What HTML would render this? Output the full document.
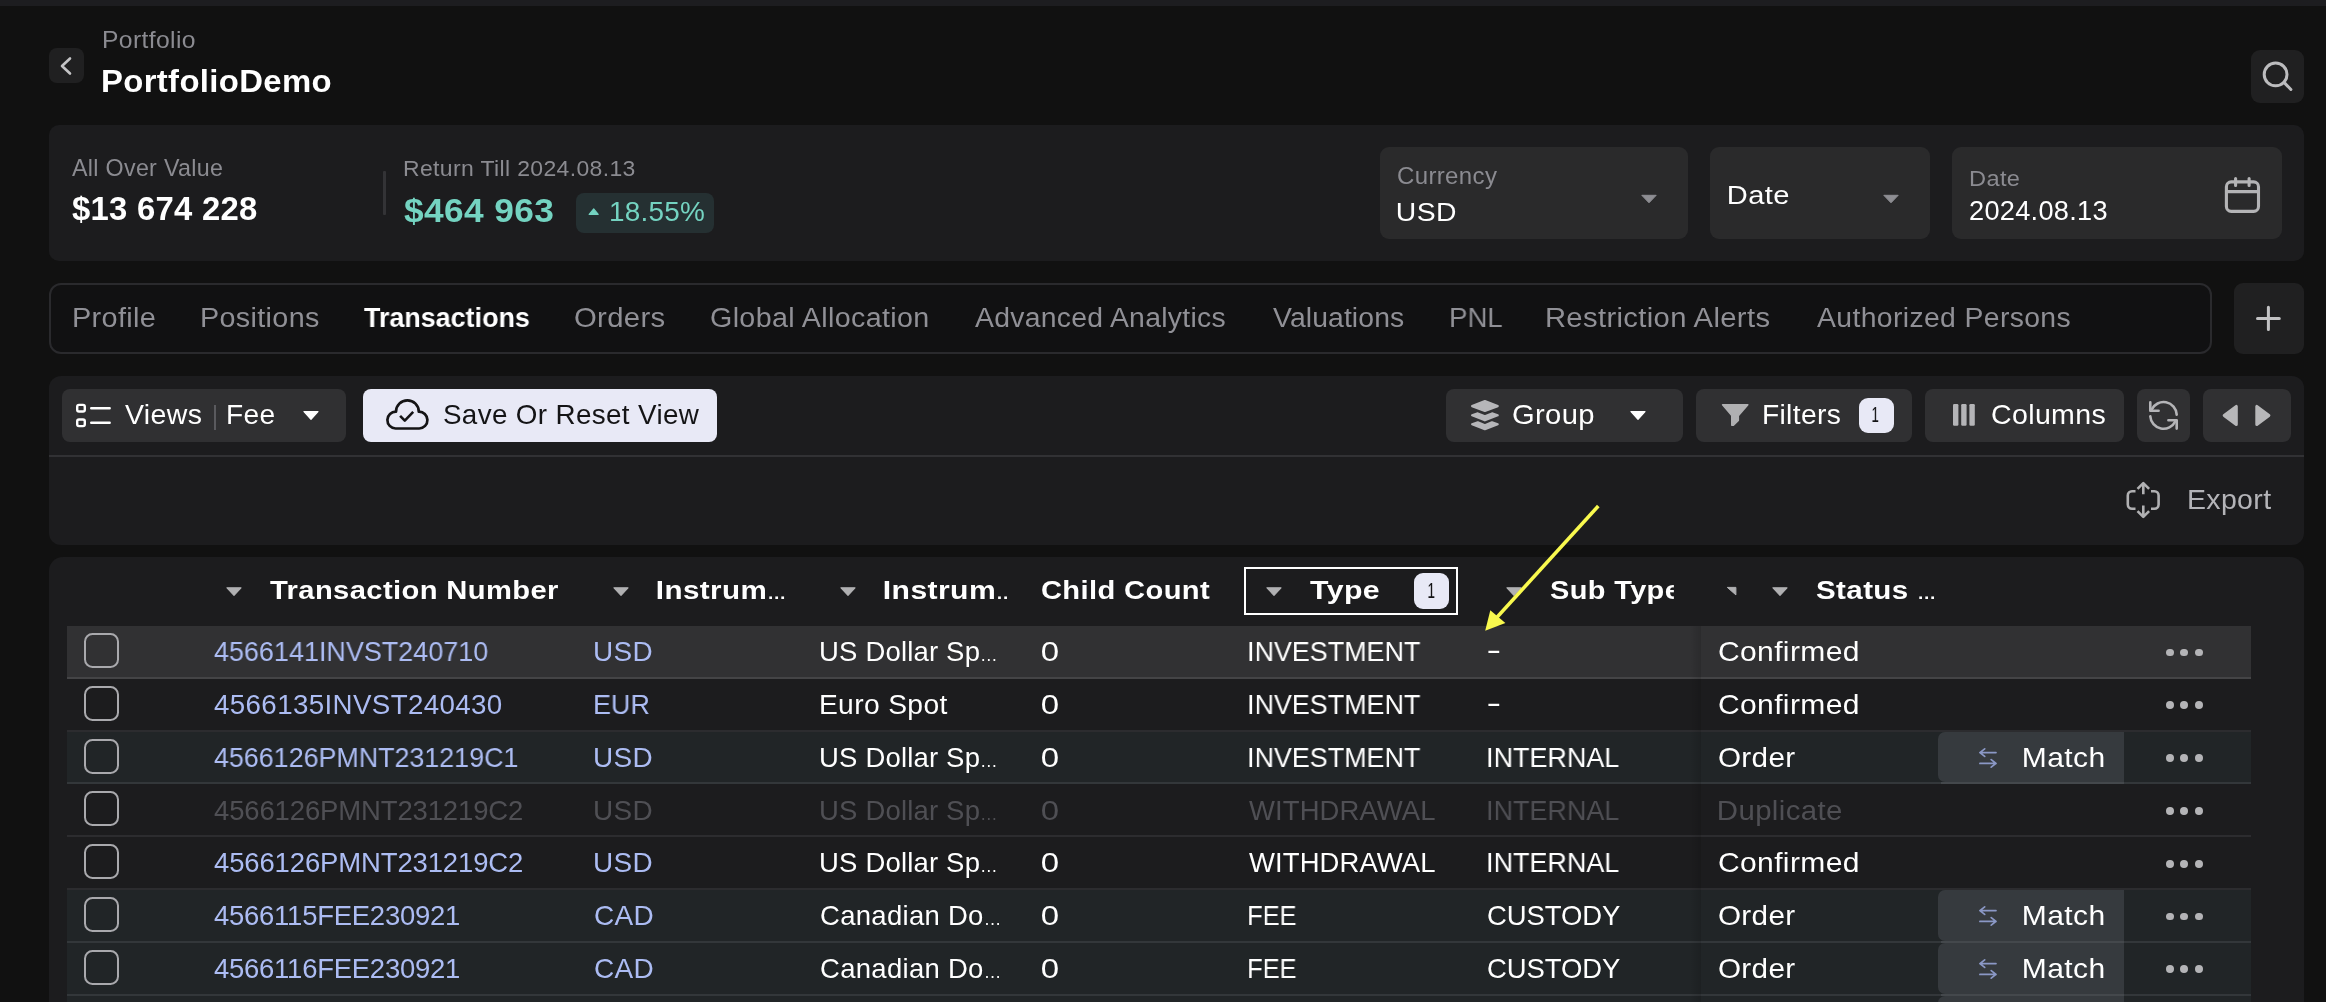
<!DOCTYPE html>
<html lang="en">
<head>
<meta charset="utf-8">
<title>PortfolioDemo – Transactions</title>
<style>
*{box-sizing:border-box;margin:0;padding:0}
html,body{width:2326px;height:1002px;overflow:hidden;background:#111111}
body{position:relative;font-family:"Liberation Sans",sans-serif;color:#fff}
.ab,.t,.box,.row,.cb,.dot,.match{position:absolute}
.t{white-space:nowrap;display:block;will-change:transform}
.box{border-radius:8px}
.row{left:67px;width:2184px}
.cb{left:84px;width:35px;height:35px;border:2px solid #a9a9ad;border-radius:8.5px}
.dot{width:7.8px;height:7.8px;border-radius:50%;background:#b4b4b7}
.match{left:1938px;width:186px;background:#363a3e;border-radius:7px 0 0 7px}
.btn{background:#303032}
.tri{position:absolute;width:0;height:0}
</style>
</head>
<body>
<!-- top strip -->
<div class="ab" style="left:0;top:0;width:2326px;height:6px;background:#1d1d20"></div>

<!-- back button -->
<div class="box" style="left:49px;top:48px;width:35px;height:35px;background:#202021;border-radius:8px"></div>
<svg class="ab" style="left:49px;top:48px" width="35" height="35" viewBox="0 0 35 35" fill="none" stroke="#c4c4c6" stroke-width="2.6" stroke-linecap="round" stroke-linejoin="round"><path d="M21 10.5L13 18l8 7.5"/></svg>

<!-- search button -->
<div class="box" style="left:2251px;top:50px;width:53px;height:53px;background:#202021;border-radius:9px"></div>
<svg class="ab" style="left:2251px;top:50px" width="53" height="53" viewBox="0 0 53 53" fill="none" stroke="#bcbcbe" stroke-width="3" stroke-linecap="round"><circle cx="24.600" cy="24.400" r="11.400"/><path d="M33 32.400L39.900 39.500"/></svg>

<!-- summary card -->
<div class="box" style="left:49px;top:125px;width:2255px;height:136px;background:#1c1c1e;border-radius:10px"></div>
<div class="ab" style="left:383px;top:171px;width:2.5px;height:44px;background:#333336;border-radius:1px"></div>
<!-- pct badge -->
<div class="box" style="left:576px;top:192.7px;width:138.2px;height:40.4px;background:#253032;border-radius:8px"></div>
<svg class="ab" style="left:587px;top:207px" width="14" height="10" viewBox="0 0 14 10"><path d="M6.700 1.900L11.200 7.400H2.200z" fill="#74d3c1" stroke="#74d3c1" stroke-width="1.200" stroke-linejoin="round"/></svg>

<!-- select boxes -->
<div class="box" style="left:1380px;top:147px;width:308px;height:92px;background:#2a2a2b;border-radius:9px"></div>
<svg class="ab" style="left:1640px;top:194px" width="18" height="10" viewBox="0 0 18 10"><path d="M1.8 1.3h14.4L9 8.8z" fill="#8e8e93" stroke="#8e8e93" stroke-width="1" stroke-linejoin="round"/></svg>
<div class="box" style="left:1710px;top:147px;width:220px;height:92px;background:#2a2a2b;border-radius:9px"></div>
<svg class="ab" style="left:1882px;top:194px" width="18" height="10" viewBox="0 0 18 10"><path d="M1.8 1.3h14.4L9 8.8z" fill="#8e8e93" stroke="#8e8e93" stroke-width="1" stroke-linejoin="round"/></svg>
<div class="box" style="left:1952px;top:147px;width:330px;height:92px;background:#2a2a2b;border-radius:9px"></div>
<!-- calendar -->
<svg class="ab" style="left:2223px;top:175px" width="40" height="40" viewBox="0 0 40 40" fill="none" stroke="#b4b4b6" stroke-width="3.100" stroke-linecap="round" stroke-linejoin="round"><rect x="3.400" y="6.900" width="32.100" height="29.500" rx="4.800"/><path d="M3.600 16.600h31.700"/><path d="M12.600 3.600v6.800M26.100 3.600v6.800"/></svg>

<!-- tabs container -->
<div class="box" style="left:49px;top:283px;width:2163px;height:71px;border:2px solid #2a2a2d;border-radius:12px;background:#111112"></div>
<!-- plus -->
<div class="box" style="left:2234px;top:283px;width:70px;height:71px;background:#202021;border-radius:9px"></div>
<svg class="ab" style="left:2254px;top:304px" width="30" height="30" viewBox="0 0 30 30" fill="none" stroke="#c2c2c4" stroke-width="3" stroke-linecap="round"><path d="M3.500 14.400h21.800M14.400 3.300v22.200"/></svg>

<!-- toolbar panel -->
<div class="box" style="left:49px;top:376px;width:2255px;height:169px;background:#1c1c1e;border-radius:12px"></div>
<div class="ab" style="left:49px;top:455px;width:2255px;height:2px;background:#313134"></div>

<!-- views button -->
<div class="box btn" style="left:62px;top:389px;width:284px;height:53px"></div>
<svg class="ab" style="left:75px;top:403px" width="38" height="26" viewBox="0 0 38 26" fill="none" stroke="#ffffff" stroke-width="2.4" stroke-linecap="round"><rect x="2.2" y="1.9" width="7.6" height="6.6" rx="1.8"/><rect x="2.2" y="16.5" width="7.6" height="6.6" rx="1.8"/><path d="M16.2 5.2h18.5M16.2 19.8h18.5"/></svg>
<div class="ab" style="left:214.2px;top:404.5px;width:1.7px;height:25px;background:#5a5a5e"></div>
<svg class="ab" style="left:302px;top:410px" width="18" height="11" viewBox="0 0 18 11"><path d="M2 1.5h14L9 9.3z" fill="#fff" stroke="#fff" stroke-width="1.2" stroke-linejoin="round"/></svg>

<!-- save button -->
<div class="box" style="left:363px;top:389px;width:354px;height:53px;background:#e8e9f6"></div>
<svg class="ab" style="left:380px;top:394px" width="56" height="42" viewBox="380 394 56 42" fill="none" stroke="#141416" stroke-width="2.7" stroke-linejoin="round"><path d="M395.6 428.5A8.4 8.4 0 1 1 396 411.7A11.4 11.4 0 0 1 418.8 411.7A8.4 8.4 0 1 1 419.2 428.5Z"/><path d="M400.1 415.8L404.8 420.6 413.2 411.9" stroke-width="2.6"/></svg>

<!-- group button -->
<div class="box btn" style="left:1446px;top:389px;width:237px;height:53px"></div>
<svg class="ab" style="left:1466px;top:396px" width="38" height="38" viewBox="1466 396 38 38" fill="#b6b6b9" stroke="#b6b6b9" stroke-width="2.200" stroke-linejoin="round"><path d="M1484.900 401.100L1497.700 406.100 1484.900 411L1472.100 406.100Z"/><path d="M1472.100 415.3L1477.800 413.4 1484.900 416.3 1492 413.4 1497.700 415.3 1484.900 420.3Z"/><path d="M1472.100 424.2L1477.800 422.3 1484.900 425.2 1492 422.3 1497.700 424.2 1484.900 429.2Z"/></svg>
<svg class="ab" style="left:1629px;top:410px" width="18" height="11" viewBox="0 0 18 11"><path d="M2 1.500h14L9 9.300z" fill="#fff" stroke="#fff" stroke-width="1.200" stroke-linejoin="round"/></svg>

<!-- filters button -->
<div class="box btn" style="left:1696px;top:389px;width:216px;height:53px"></div>
<svg class="ab" style="left:1716px;top:400px" width="38" height="30" viewBox="1716 400 38 30" fill="#b0b0b2" stroke="#b0b0b2" stroke-width="1.6" stroke-linejoin="round"><path d="M1722.6 404.8H1747.8L1738.3 415.6V420.4L1733.4 425.2H1731.8V415.6Z"/></svg>
<div class="box" style="left:1859px;top:398px;width:35px;height:35px;background:#e8e9f6;border-radius:9px"></div>

<!-- columns button -->
<div class="box btn" style="left:1925px;top:389px;width:199px;height:53px"></div>
<svg class="ab" style="left:1952px;top:403px" width="24" height="24" viewBox="0 0 24 24" fill="#b4b4b7"><rect x="1" y="1" width="5.400" height="21.800" rx="1.200"/><rect x="9.200" y="1" width="5.400" height="21.800" rx="1.200"/><rect x="17.400" y="1" width="5.400" height="21.800" rx="1.200"/></svg>

<!-- refresh button -->
<div class="box btn" style="left:2137px;top:389px;width:53px;height:53px"></div>
<svg class="ab" style="left:2145px;top:397px" width="38" height="38" viewBox="2145 397 38 38" fill="none" stroke="#b4b4b7" stroke-width="2.6" stroke-linecap="round" stroke-linejoin="round"><path d="M2176.7 414.6A13.2 13.2 0 0 0 2151.6 409.6"/><path d="M2150.3 402.4V410.7H2158.6"/><path d="M2150.3 416.2A13.2 13.2 0 0 0 2175.4 421.2"/><path d="M2168.4 420.3H2176.7V428.6"/></svg>

<!-- arrows button -->
<div class="box btn" style="left:2203px;top:389px;width:88px;height:53px"></div>
<svg class="ab" style="left:2221px;top:403px" width="52" height="25" viewBox="0 0 52 25" fill="#b7b7b9" stroke="#b7b7b9" stroke-width="3" stroke-linejoin="round"><path d="M15.300 3.400v18.100L3.200 12.450z"/><path d="M35.800 3.400v18.100l12.100-9.050z"/></svg>

<!-- export -->
<svg class="ab" style="left:2122px;top:478px" width="44" height="44" viewBox="2122 478 44 44" fill="none" stroke="#b0b0b2" stroke-width="2.6" stroke-linejoin="round"><path d="M2135.5 491.3H2132A4.2 4.2 0 0 0 2127.8 495.5V504.5A4.2 4.2 0 0 0 2132 508.7H2135.5"/><path d="M2151 491.3H2154.4A4.2 4.2 0 0 1 2158.6 495.5V504.5A4.2 4.2 0 0 1 2154.400 508.7H2151"/><path d="M2143.3 494.200V483.600M2137.500 488.900L2143.300 483.100 2149.100 488.900"/><path d="M2143.300 505.600V516.400M2137.500 511.100L2143.300 516.900 2149.100 511.100"/></svg>

<!-- table panel -->
<div class="box" style="left:49px;top:557px;width:2255px;height:470px;background:#1c1c1e;border-radius:14px"></div>
<div class="row" style="top:626.00px;height:52.80px;background:#313133;border-bottom:2px solid #444446"></div>
<div class="cb" style="top:633.00px"></div>
<div class="dot" style="left:2165.90px;top:648.60px"></div>
<div class="dot" style="left:2180.40px;top:648.60px"></div>
<div class="dot" style="left:2194.90px;top:648.60px"></div>
<div class="row" style="top:678.80px;height:52.80px;background:#1c1c1e;border-bottom:2px solid #2c2c2f"></div>
<div class="cb" style="top:685.80px"></div>
<div class="dot" style="left:2165.90px;top:701.40px"></div>
<div class="dot" style="left:2180.40px;top:701.40px"></div>
<div class="dot" style="left:2194.90px;top:701.40px"></div>
<div class="row" style="top:731.60px;height:52.80px;background:#212527;border-bottom:2px solid #33373a"></div>
<div class="cb" style="top:738.60px"></div>
<div class="dot" style="left:2165.90px;top:754.20px"></div>
<div class="dot" style="left:2180.40px;top:754.20px"></div>
<div class="dot" style="left:2194.90px;top:754.20px"></div>
<div class="match" style="top:731.60px;height:50.80px"></div>
<div class="ab" style="left:1941px;top:782.40px;width:183px;height:2px;background:#44484c"></div>
<svg class="ab" style="left:1976px;top:745.60px" width="24" height="24" viewBox="0 0 24 24" fill="none" stroke="#8b98c6" stroke-width="1.7" stroke-linecap="round" stroke-linejoin="round"><path d="M20 6.600H3.900M8.700 2.800L3.900 6.600l4.800 3.800M3.900 17.400h16.100M15.200 13.600l4.800 3.800-4.800 3.800"/></svg>
<div class="row" style="top:784.40px;height:52.80px;background:#1c1c1e;border-bottom:2px solid #2c2c2f"></div>
<div class="cb" style="top:791.40px"></div>
<div class="dot" style="left:2165.90px;top:807.00px"></div>
<div class="dot" style="left:2180.40px;top:807.00px"></div>
<div class="dot" style="left:2194.90px;top:807.00px"></div>
<div class="row" style="top:837.20px;height:52.80px;background:#1c1c1e;border-bottom:2px solid #2c2c2f"></div>
<div class="cb" style="top:844.20px"></div>
<div class="dot" style="left:2165.90px;top:859.80px"></div>
<div class="dot" style="left:2180.40px;top:859.80px"></div>
<div class="dot" style="left:2194.90px;top:859.80px"></div>
<div class="row" style="top:890.00px;height:52.80px;background:#212527;border-bottom:2px solid #33373a"></div>
<div class="cb" style="top:897.00px"></div>
<div class="dot" style="left:2165.90px;top:912.60px"></div>
<div class="dot" style="left:2180.40px;top:912.60px"></div>
<div class="dot" style="left:2194.90px;top:912.60px"></div>
<div class="match" style="top:890.00px;height:50.80px"></div>
<div class="ab" style="left:1941px;top:940.80px;width:183px;height:2px;background:#44484c"></div>
<svg class="ab" style="left:1976px;top:904.00px" width="24" height="24" viewBox="0 0 24 24" fill="none" stroke="#8b98c6" stroke-width="1.7" stroke-linecap="round" stroke-linejoin="round"><path d="M20 6.600H3.900M8.700 2.800L3.900 6.600l4.800 3.800M3.900 17.400h16.100M15.200 13.600l4.800 3.800-4.800 3.800"/></svg>
<div class="row" style="top:942.80px;height:52.80px;background:#212527;border-bottom:2px solid #33373a"></div>
<div class="cb" style="top:949.80px"></div>
<div class="dot" style="left:2165.90px;top:965.40px"></div>
<div class="dot" style="left:2180.40px;top:965.40px"></div>
<div class="dot" style="left:2194.90px;top:965.40px"></div>
<div class="match" style="top:942.80px;height:50.80px"></div>
<div class="ab" style="left:1941px;top:993.60px;width:183px;height:2px;background:#44484c"></div>
<svg class="ab" style="left:1976px;top:956.80px" width="24" height="24" viewBox="0 0 24 24" fill="none" stroke="#8b98c6" stroke-width="1.7" stroke-linecap="round" stroke-linejoin="round"><path d="M20 6.600H3.900M8.700 2.800L3.900 6.600l4.800 3.800M3.900 17.400h16.100M15.200 13.600l4.800 3.800-4.800 3.800"/></svg>
<div class="row" style="top:995.60px;height:20px;background:#212527"></div>
<div class="match" style="top:995.60px;height:20px"></div>
<div class="cb" style="top:1003.20px"></div>
<!-- pinned shadow -->
<div class="ab" style="left:1690px;top:626px;width:11px;height:376px;background:linear-gradient(90deg,rgba(0,0,0,0),rgba(0,0,0,.13))"></div>

<!-- header arrows -->
<svg class="ab" style="left:225.4px;top:586px" width="18" height="11" viewBox="0 0 18 11"><path d="M2 1.800h14L9 9.300z" fill="#b0b0b2" stroke="#b0b0b2" stroke-width="1.200" stroke-linejoin="round"/></svg>
<svg class="ab" style="left:611.9px;top:586px" width="18" height="11" viewBox="0 0 18 11"><path d="M2 1.800h14L9 9.300z" fill="#b0b0b2" stroke="#b0b0b2" stroke-width="1.200" stroke-linejoin="round"/></svg>
<svg class="ab" style="left:838.9px;top:586px" width="18" height="11" viewBox="0 0 18 11"><path d="M2 1.800h14L9 9.300z" fill="#b0b0b2" stroke="#b0b0b2" stroke-width="1.200" stroke-linejoin="round"/></svg>
<svg class="ab" style="left:1265.4px;top:586px" width="18" height="11" viewBox="0 0 18 11"><path d="M2 1.800h14L9 9.300z" fill="#b0b0b2" stroke="#b0b0b2" stroke-width="1.200" stroke-linejoin="round"/></svg>
<svg class="ab" style="left:1505.4px;top:586px" width="18" height="11" viewBox="0 0 18 11"><path d="M2 1.800h14L9 9.300z" fill="#b0b0b2" stroke="#b0b0b2" stroke-width="1.200" stroke-linejoin="round"/></svg>
<svg class="ab" style="left:1724px;top:584px" width="16" height="14" viewBox="1724 584 16 14"><path d="M1727.300 587.400H1735.900V594.900Z" fill="#b0b0b2" stroke="#b0b0b2" stroke-width="1" stroke-linejoin="round"/></svg>
<svg class="ab" style="left:1770.9px;top:586px" width="18" height="11" viewBox="0 0 18 11"><path d="M2 1.800h14L9 9.300z" fill="#b0b0b2" stroke="#b0b0b2" stroke-width="1.200" stroke-linejoin="round"/></svg>

<!-- type filter box -->
<div class="ab" style="left:1244px;top:567px;width:214px;height:48px;border:2px solid #ffffff"></div>
<div class="box" style="left:1414px;top:573px;width:35px;height:36px;background:#e8e9f6;border-radius:9px"></div>

<span class="t" style="left:102.00px;top:27px;font-size:23.26px;line-height:26px;color:#8b8b91;letter-spacing:0.350px;transform-origin:1.00px 50%;transform:scaleX(1.062);">Portfolio</span>
<span class="t" style="left:101.00px;top:63px;font-size:31.98px;line-height:36px;color:#ffffff;font-weight:700;letter-spacing:0.350px;transform-origin:2.00px 50%;transform:scaleX(1.028);">PortfolioDemo</span>
<span class="t" style="left:72.00px;top:155px;font-size:23.26px;line-height:26px;color:#8b8b91;letter-spacing:0.312px;">All Over Value</span>
<span class="t" style="left:72.00px;top:190px;font-size:32.85px;line-height:37px;color:#ffffff;font-weight:700;letter-spacing:0.270px;">$13 674 228</span>
<span class="t" style="left:403.00px;top:155px;font-size:22.97px;line-height:26px;color:#8b8b91;letter-spacing:0.363px;">Return Till 2024.08.13</span>
<span class="t" style="left:404.00px;top:192px;font-size:32.7px;line-height:37px;color:#74d3c1;font-weight:700;letter-spacing:0.350px;transform-origin:0.00px 50%;transform:scaleX(1.080);">$464 963</span>
<span class="t" style="left:609.30px;top:196px;font-size:27.91px;line-height:31px;color:#74d3c1;letter-spacing:0.213px;">18.55%</span>
<span class="t" style="left:1397.00px;top:162px;font-size:23.84px;line-height:27px;color:#8b8b91;letter-spacing:0.350px;transform-origin:1.00px 50%;transform:scaleX(1.008);">Currency</span>
<span class="t" style="left:1396.00px;top:197px;font-size:26.16px;line-height:30px;color:#ffffff;letter-spacing:0.350px;transform-origin:2.00px 50%;transform:scaleX(1.084);">USD</span>
<span class="t" style="left:1726.60px;top:180px;font-size:26.16px;line-height:30px;color:#ffffff;letter-spacing:0.350px;transform-origin:2.00px 50%;transform:scaleX(1.112);">Date</span>
<span class="t" style="left:1969.40px;top:166px;font-size:22.53px;line-height:25px;color:#8b8b91;letter-spacing:0.350px;transform-origin:1.00px 50%;transform:scaleX(1.049);">Date</span>
<span class="t" style="left:1969.40px;top:195px;font-size:27.18px;line-height:31px;color:#ffffff;letter-spacing:0.280px;">2024.08.13</span>
<span class="t" style="left:72.40px;top:301px;font-size:28.34px;line-height:32px;color:#909096;letter-spacing:0.350px;transform-origin:2.00px 50%;transform:scaleX(1.018);">Profile</span>
<span class="t" style="left:199.60px;top:301px;font-size:28.34px;line-height:32px;color:#909096;letter-spacing:0.350px;transform-origin:2.00px 50%;transform:scaleX(1.014);">Positions</span>
<span class="t" style="left:364.20px;top:301px;font-size:28.34px;line-height:32px;color:#ffffff;font-weight:700;transform-origin:0.00px 50%;transform:scaleX(0.949);">Transactions</span>
<span class="t" style="left:574.00px;top:301px;font-size:28.34px;line-height:32px;color:#909096;letter-spacing:0.350px;transform-origin:1.00px 50%;transform:scaleX(1.033);">Orders</span>
<span class="t" style="left:710.00px;top:301px;font-size:28.34px;line-height:32px;color:#909096;letter-spacing:0.350px;transform-origin:1.00px 50%;transform:scaleX(1.012);">Global Allocation</span>
<span class="t" style="left:975.00px;top:301px;font-size:28.34px;line-height:32px;color:#909096;letter-spacing:0.291px;">Advanced Analytics</span>
<span class="t" style="left:1273.00px;top:301px;font-size:28.34px;line-height:32px;color:#909096;letter-spacing:0.109px;">Valuations</span>
<span class="t" style="left:1448.50px;top:301px;font-size:28.34px;line-height:32px;color:#909096;transform-origin:2.00px 50%;transform:scaleX(0.974);">PNL</span>
<span class="t" style="left:1545.00px;top:301px;font-size:28.34px;line-height:32px;color:#909096;letter-spacing:0.350px;transform-origin:2.00px 50%;transform:scaleX(1.030);">Restriction Alerts</span>
<span class="t" style="left:1817.00px;top:301px;font-size:28.34px;line-height:32px;color:#909096;letter-spacing:0.379px;">Authorized Persons</span>
<span class="t" style="left:124.80px;top:400px;font-size:26.89px;line-height:30px;color:#ffffff;letter-spacing:0.350px;transform-origin:0.00px 50%;transform:scaleX(1.060);">Views</span>
<span class="t" style="left:226.30px;top:400px;font-size:26.89px;line-height:30px;color:#ffffff;letter-spacing:0.350px;transform-origin:2.00px 50%;transform:scaleX(1.046);">Fee</span>
<span class="t" style="left:442.50px;top:400px;font-size:26.89px;line-height:30px;color:#141416;letter-spacing:0.350px;transform-origin:1.00px 50%;transform:scaleX(1.034);">Save Or Reset View</span>
<span class="t" style="left:1511.80px;top:400px;font-size:26.89px;line-height:30px;color:#ffffff;letter-spacing:0.350px;transform-origin:1.00px 50%;transform:scaleX(1.086);">Group</span>
<span class="t" style="left:1761.60px;top:400px;font-size:26.89px;line-height:30px;color:#ffffff;letter-spacing:0.350px;transform-origin:2.00px 50%;transform:scaleX(1.049);">Filters</span>
<span class="t" style="left:1871.40px;top:402px;font-size:21.8px;line-height:25px;color:#141416;transform-origin:1.00px 50%;transform:scaleX(0.627);">1</span>
<span class="t" style="left:1990.70px;top:400px;font-size:26.89px;line-height:30px;color:#ffffff;letter-spacing:0.350px;transform-origin:1.00px 50%;transform:scaleX(1.062);">Columns</span>
<span class="t" style="left:2187.40px;top:485px;font-size:27.03px;line-height:30px;color:#b4b4b8;letter-spacing:0.350px;transform-origin:2.00px 50%;transform:scaleX(1.055);">Export</span>
<span class="t" style="left:270.00px;top:575px;font-size:26.16px;line-height:30px;color:#ffffff;font-weight:700;letter-spacing:0.350px;transform-origin:0.00px 50%;transform:scaleX(1.114);">Transaction Number</span>
<span class="t" style="left:656.30px;top:575px;font-size:26.16px;line-height:30px;color:#ffffff;font-weight:700;letter-spacing:0.350px;transform-origin:1.00px 50%;transform:scaleX(1.131);">Instrum<span style="font-size:64%">…</span></span>
<span class="t" style="left:882.70px;top:575px;font-size:26.16px;line-height:30px;color:#ffffff;font-weight:700;letter-spacing:0.350px;width:108.41px;overflow:hidden;transform-origin:1.00px 50%;transform:scaleX(1.151);">Instrum<span style="font-size:64%">…</span></span>
<span class="t" style="left:1041.00px;top:575px;font-size:26.16px;line-height:30px;color:#ffffff;font-weight:700;letter-spacing:0.350px;transform-origin:1.00px 50%;transform:scaleX(1.113);">Child Count</span>
<span class="t" style="left:1310.00px;top:575px;font-size:26.16px;line-height:30px;color:#ffffff;font-weight:700;letter-spacing:0.350px;transform-origin:0.00px 50%;transform:scaleX(1.158);">Type</span>
<span class="t" style="left:1427.00px;top:578px;font-size:21.8px;line-height:25px;color:#141416;transform-origin:1.00px 50%;transform:scaleX(0.636);">1</span>
<span class="t" style="left:1550.30px;top:575px;font-size:26.16px;line-height:30px;color:#ffffff;font-weight:700;letter-spacing:0.350px;width:112.25px;overflow:hidden;transform-origin:0.00px 50%;transform:scaleX(1.106);">Sub Type</span>
<span class="t" style="left:1815.80px;top:575px;font-size:26.16px;line-height:30px;color:#ffffff;font-weight:700;letter-spacing:0.350px;transform-origin:0.00px 50%;transform:scaleX(1.129);">Status <span style="font-size:64%">…</span></span>
<span class="t" style="left:214.00px;top:636px;font-size:27.47px;line-height:31px;color:#acbcf3;transform-origin:0.00px 50%;transform:scaleX(0.981);">4566141INVST240710</span>
<span class="t" style="left:593.00px;top:636px;font-size:27.47px;line-height:31px;color:#acbcf3;letter-spacing:0.350px;transform-origin:2.00px 50%;transform:scaleX(1.017);">USD</span>
<span class="t" style="left:819.30px;top:636px;font-size:27.47px;line-height:31px;color:#ffffff;letter-spacing:0.195px;">US Dollar Sp<span style="font-size:64%">…</span></span>
<span class="t" style="left:1041.00px;top:636px;font-size:27.47px;line-height:31px;color:#ffffff;transform-origin:1.00px 50%;transform:scaleX(1.200);">0</span>
<span class="t" style="left:1246.70px;top:636px;font-size:27.47px;line-height:31px;color:#ffffff;transform-origin:2.00px 50%;transform:scaleX(0.979);">INVESTMENT</span>
<span class="t" style="left:1487.30px;top:634px;font-size:27.47px;line-height:31px;color:#ffffff;transform-origin:1.00px 50%;transform:scaleX(1.600);">-</span>
<span class="t" style="left:1718.00px;top:636px;font-size:27.47px;line-height:31px;color:#ffffff;letter-spacing:0.350px;transform-origin:1.00px 50%;transform:scaleX(1.093);">Confirmed</span>
<span class="t" style="left:214.00px;top:689px;font-size:27.47px;line-height:31px;color:#acbcf3;letter-spacing:0.350px;transform-origin:0.00px 50%;transform:scaleX(1.010);">4566135INVST240430</span>
<span class="t" style="left:593.00px;top:689px;font-size:27.47px;line-height:31px;color:#acbcf3;transform-origin:2.00px 50%;transform:scaleX(0.979);">EUR</span>
<span class="t" style="left:819.30px;top:689px;font-size:27.47px;line-height:31px;color:#ffffff;letter-spacing:0.350px;transform-origin:2.00px 50%;transform:scaleX(1.027);">Euro Spot</span>
<span class="t" style="left:1041.00px;top:689px;font-size:27.47px;line-height:31px;color:#ffffff;transform-origin:1.00px 50%;transform:scaleX(1.200);">0</span>
<span class="t" style="left:1246.70px;top:689px;font-size:27.47px;line-height:31px;color:#ffffff;transform-origin:2.00px 50%;transform:scaleX(0.979);">INVESTMENT</span>
<span class="t" style="left:1487.30px;top:687px;font-size:27.47px;line-height:31px;color:#ffffff;transform-origin:1.00px 50%;transform:scaleX(1.600);">-</span>
<span class="t" style="left:1718.00px;top:689px;font-size:27.47px;line-height:31px;color:#ffffff;letter-spacing:0.350px;transform-origin:1.00px 50%;transform:scaleX(1.093);">Confirmed</span>
<span class="t" style="left:214.00px;top:742px;font-size:27.47px;line-height:31px;color:#acbcf3;transform-origin:0.00px 50%;transform:scaleX(0.977);">4566126PMNT231219C1</span>
<span class="t" style="left:593.00px;top:742px;font-size:27.47px;line-height:31px;color:#acbcf3;letter-spacing:0.350px;transform-origin:2.00px 50%;transform:scaleX(1.017);">USD</span>
<span class="t" style="left:819.30px;top:742px;font-size:27.47px;line-height:31px;color:#ffffff;letter-spacing:0.195px;">US Dollar Sp<span style="font-size:64%">…</span></span>
<span class="t" style="left:1041.00px;top:742px;font-size:27.47px;line-height:31px;color:#ffffff;transform-origin:1.00px 50%;transform:scaleX(1.200);">0</span>
<span class="t" style="left:1246.70px;top:742px;font-size:27.47px;line-height:31px;color:#ffffff;transform-origin:2.00px 50%;transform:scaleX(0.979);">INVESTMENT</span>
<span class="t" style="left:1486.00px;top:742px;font-size:27.47px;line-height:31px;color:#ffffff;transform-origin:2.00px 50%;transform:scaleX(0.981);">INTERNAL</span>
<span class="t" style="left:1718.00px;top:742px;font-size:27.47px;line-height:31px;color:#ffffff;letter-spacing:0.350px;transform-origin:1.00px 50%;transform:scaleX(1.079);">Order</span>
<span class="t" style="left:2022.00px;top:742px;font-size:27.47px;line-height:31px;color:#ffffff;letter-spacing:0.350px;transform-origin:2.00px 50%;transform:scaleX(1.093);">Match</span>
<span class="t" style="left:214.00px;top:795px;font-size:27.47px;line-height:31px;color:#4f4f54;letter-spacing:-0.125px;">4566126PMNT231219C2</span>
<span class="t" style="left:593.00px;top:795px;font-size:27.47px;line-height:31px;color:#4f4f54;letter-spacing:0.350px;transform-origin:2.00px 50%;transform:scaleX(1.017);">USD</span>
<span class="t" style="left:819.30px;top:795px;font-size:27.47px;line-height:31px;color:#4f4f54;letter-spacing:0.195px;">US Dollar Sp<span style="font-size:64%">…</span></span>
<span class="t" style="left:1041.00px;top:795px;font-size:27.47px;line-height:31px;color:#4f4f54;transform-origin:1.00px 50%;transform:scaleX(1.200);">0</span>
<span class="t" style="left:1248.70px;top:795px;font-size:27.47px;line-height:31px;color:#4f4f54;letter-spacing:0.102px;">WITHDRAWAL</span>
<span class="t" style="left:1486.00px;top:795px;font-size:27.47px;line-height:31px;color:#4f4f54;transform-origin:2.00px 50%;transform:scaleX(0.981);">INTERNAL</span>
<span class="t" style="left:1717.00px;top:795px;font-size:27.47px;line-height:31px;color:#4f4f54;letter-spacing:0.350px;transform-origin:2.00px 50%;transform:scaleX(1.069);">Duplicate</span>
<span class="t" style="left:214.00px;top:847px;font-size:27.47px;line-height:31px;color:#acbcf3;letter-spacing:-0.125px;">4566126PMNT231219C2</span>
<span class="t" style="left:593.00px;top:847px;font-size:27.47px;line-height:31px;color:#acbcf3;letter-spacing:0.350px;transform-origin:2.00px 50%;transform:scaleX(1.017);">USD</span>
<span class="t" style="left:819.30px;top:847px;font-size:27.47px;line-height:31px;color:#ffffff;letter-spacing:0.195px;">US Dollar Sp<span style="font-size:64%">…</span></span>
<span class="t" style="left:1041.00px;top:847px;font-size:27.47px;line-height:31px;color:#ffffff;transform-origin:1.00px 50%;transform:scaleX(1.200);">0</span>
<span class="t" style="left:1248.70px;top:847px;font-size:27.47px;line-height:31px;color:#ffffff;letter-spacing:0.102px;">WITHDRAWAL</span>
<span class="t" style="left:1486.00px;top:847px;font-size:27.47px;line-height:31px;color:#ffffff;transform-origin:2.00px 50%;transform:scaleX(0.981);">INTERNAL</span>
<span class="t" style="left:1718.00px;top:847px;font-size:27.47px;line-height:31px;color:#ffffff;letter-spacing:0.350px;transform-origin:1.00px 50%;transform:scaleX(1.093);">Confirmed</span>
<span class="t" style="left:214.00px;top:900px;font-size:27.47px;line-height:31px;color:#acbcf3;letter-spacing:-0.247px;">4566115FEE230921</span>
<span class="t" style="left:594.00px;top:900px;font-size:27.47px;line-height:31px;color:#acbcf3;letter-spacing:0.350px;transform-origin:1.00px 50%;transform:scaleX(1.020);">CAD</span>
<span class="t" style="left:820.30px;top:900px;font-size:27.47px;line-height:31px;color:#ffffff;letter-spacing:0.305px;">Canadian Do<span style="font-size:64%">…</span></span>
<span class="t" style="left:1041.00px;top:900px;font-size:27.47px;line-height:31px;color:#ffffff;transform-origin:1.00px 50%;transform:scaleX(1.200);">0</span>
<span class="t" style="left:1246.70px;top:900px;font-size:27.47px;line-height:31px;color:#ffffff;transform-origin:2.00px 50%;transform:scaleX(0.926);">FEE</span>
<span class="t" style="left:1487.00px;top:900px;font-size:27.47px;line-height:31px;color:#ffffff;letter-spacing:-0.080px;">CUSTODY</span>
<span class="t" style="left:1718.00px;top:900px;font-size:27.47px;line-height:31px;color:#ffffff;letter-spacing:0.350px;transform-origin:1.00px 50%;transform:scaleX(1.079);">Order</span>
<span class="t" style="left:2022.00px;top:900px;font-size:27.47px;line-height:31px;color:#ffffff;letter-spacing:0.350px;transform-origin:2.00px 50%;transform:scaleX(1.093);">Match</span>
<span class="t" style="left:214.00px;top:953px;font-size:27.47px;line-height:31px;color:#acbcf3;letter-spacing:-0.247px;">4566116FEE230921</span>
<span class="t" style="left:594.00px;top:953px;font-size:27.47px;line-height:31px;color:#acbcf3;letter-spacing:0.350px;transform-origin:1.00px 50%;transform:scaleX(1.020);">CAD</span>
<span class="t" style="left:820.30px;top:953px;font-size:27.47px;line-height:31px;color:#ffffff;letter-spacing:0.305px;">Canadian Do<span style="font-size:64%">…</span></span>
<span class="t" style="left:1041.00px;top:953px;font-size:27.47px;line-height:31px;color:#ffffff;transform-origin:1.00px 50%;transform:scaleX(1.200);">0</span>
<span class="t" style="left:1246.70px;top:953px;font-size:27.47px;line-height:31px;color:#ffffff;transform-origin:2.00px 50%;transform:scaleX(0.926);">FEE</span>
<span class="t" style="left:1487.00px;top:953px;font-size:27.47px;line-height:31px;color:#ffffff;letter-spacing:-0.080px;">CUSTODY</span>
<span class="t" style="left:1718.00px;top:953px;font-size:27.47px;line-height:31px;color:#ffffff;letter-spacing:0.350px;transform-origin:1.00px 50%;transform:scaleX(1.079);">Order</span>
<span class="t" style="left:2022.00px;top:953px;font-size:27.47px;line-height:31px;color:#ffffff;letter-spacing:0.350px;transform-origin:2.00px 50%;transform:scaleX(1.093);">Match</span>

<!-- yellow annotation arrow -->
<svg class="ab" style="left:1470px;top:495px" width="140" height="145" viewBox="1470 495 140 145"><path d="M1598.300 506L1497 617.200" stroke="#f9f94e" stroke-width="3.500" fill="none"/><path d="M1485.200 630.700L1490.300 610.300 1505.400 623z" fill="#f9f94e"/></svg>
</body>
</html>
